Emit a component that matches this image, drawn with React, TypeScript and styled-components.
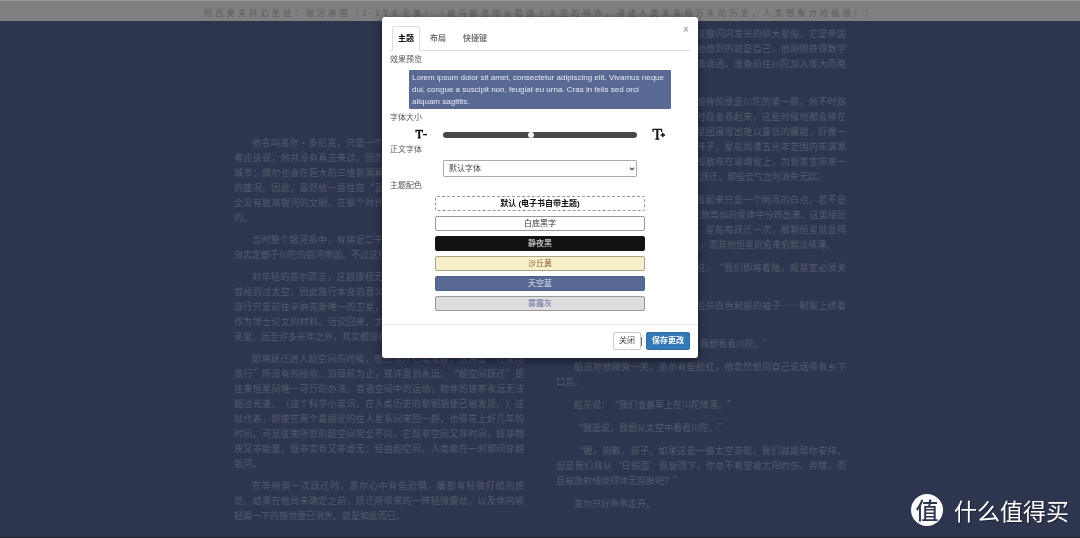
import React, { useState } from "react";
import styled, { createGlobalStyle, css } from "styled-components";

const sans = `"Liberation Sans", "Noto Sans CJK SC", sans-serif`;
const cjk = `"Noto Sans CJK SC", "Liberation Sans", sans-serif`;

const GlobalStyle = createGlobalStyle`
  *, *::before, *::after { box-sizing: border-box; }
  body { margin: 0; background: #2e364f; font-family: ${sans}; overflow: hidden; }
  button, input, select { font-family: inherit; margin: 0; }
`;

const Page = styled.div`
  min-height: 100vh;
  background: #2e364f;
  border-bottom: 1px solid #24272f;
`;

const TitleBar = styled.header`
  height: 21px;
  padding: 5px 16px 0;
  background: #7f7f7f;
  border-top: 1px solid #9b9b9b;
`;

const BookTitle = styled.h1`
  max-width: 672px;
  margin: 0 auto;
  font: 400 8px/14px ${cjk};
  letter-spacing: 3px;
  text-align: justify;
  text-align-last: justify;
  text-spacing-trim: space-all;
  white-space: nowrap;
  color: #5c5c5c;
`;

const Spread = styled.main`
  display: flex;
  align-items: flex-start;
  gap: 32px;
  max-width: 612px;
  margin: 0 auto;
  padding-top: 5px;
`;

const Column = styled.article<{ $top: number; $gap: number }>`
  flex: 1;
  min-width: 0;
  display: flex;
  flex-direction: column;
  gap: ${(p) => p.$gap}px;
  padding-top: ${(p) => p.$top}px;
`;

const Paragraph = styled.p<{ $continued?: boolean }>`
  margin: 0;
  font: 400 9px/15px ${cjk};
  color: #545b6e;
  text-spacing-trim: space-all;

  & > span:first-child {
    text-indent: ${(p) => (p.$continued ? "0" : "2em")};
  }
`;

const Line = styled.span<{ $full: boolean }>`
  display: block;
  white-space: nowrap;
  text-align: left;
  ${(p) =>
    p.$full &&
    css`
      text-align: justify;
      text-align-last: justify;
    `}
`;

const Overlay = styled.div`
  position: fixed;
  inset: 0;
  display: flex;
  justify-content: center;
  align-items: flex-start;
  padding-top: 17px;
`;

const Dialog = styled.section`
  width: 316px;
  background: #fff;
  border-radius: 3px;
  box-shadow: 0 2px 8px rgba(0, 0, 0, 0.55);
  color: #444;
`;

const DialogHead = styled.header`
  display: flex;
  align-items: flex-start;
  margin: 0 8px;
  padding: 9px 0 0 2px;
  border-bottom: 1px solid #ddd;
`;

const TabList = styled.div`
  display: flex;
  flex: 1;
  gap: 3px;
`;

const Tab = styled.button<{ $active: boolean }>`
  height: 25px;
  margin-bottom: -1px;
  padding: 0 5px;
  border: 1px solid ${(p) => (p.$active ? "#ddd" : "transparent")};
  border-bottom-color: ${(p) => (p.$active ? "#fff" : "transparent")};
  border-radius: 3px 3px 0 0;
  background: ${(p) => (p.$active ? "#fff" : "transparent")};
  color: ${(p) => (p.$active ? "#111" : "#777")};
  font-size: 8px;
  font-weight: 700;
  line-height: 12px;

  & + & {
    padding: 0 6px;
  }
`;

const CloseIcon = styled.button`
  width: 8px;
  height: 8px;
  padding: 0;
  border: 0;
  background: none;
  color: #aaa;
  font-size: 10px;
  font-weight: 700;
  line-height: 8px;
`;

const DialogBody = styled.div`
  display: flex;
  flex-direction: column;
  gap: 3px;
  padding: 3px 8px 13px;
`;

const Section = styled.div`
  display: flex;
  flex-direction: column;
  align-items: center;
  gap: 4px;
`;

const Label = styled.label`
  align-self: flex-start;
  font-size: 8px;
  line-height: 12px;
  color: #555;
`;

const Preview = styled.p`
  width: 262px;
  margin: 0;
  padding: 2px 6px 1px 3px;
  background: #586a94;
  border-radius: 1px;
  color: #e6eaf2;
  font-size: 8px;
  line-height: 12px;
`;

const SizeRow = styled.div`
  display: grid;
  grid-template-columns: 28px 194px 28px;
  align-items: center;
  height: 13px;
`;

const SizeButton = styled.button<{ $large?: boolean }>`
  display: flex;
  align-items: center;
  justify-content: ${(p) => (p.$large ? "flex-end" : "flex-start")};
  height: 13px;
  padding: 0;
  border: 0;
  background: none;
`;

const Slider = styled.input`
  appearance: none;
  width: 100%;
  height: 6px;
  border-radius: 3px;
  background: #4a4849;

  &::-webkit-slider-thumb {
    appearance: none;
    width: 6px;
    height: 6px;
    border-radius: 50%;
    background: #f2f2f2;
  }
`;

const SelectBox = styled.div`
  position: relative;
  width: 194px;
  height: 17px;

  svg {
    position: absolute;
    right: 2px;
    top: 7px;
    pointer-events: none;
  }
`;

const FontSelect = styled.select`
  display: block;
  appearance: none;
  width: 100%;
  height: 17px;
  padding: 0 5px;
  border: 1px solid #aaa;
  border-radius: 1px;
  background: #fff;
  color: #444;
  font-size: 8px;
  line-height: 12px;
`;

const ThemeList = styled.div`
  display: flex;
  flex-direction: column;
  gap: 5px;
  width: 210px;
`;

interface Scheme {
  name: string;
  bg: string;
  fg: string;
  border: string;
  bold?: boolean;
}

const ThemeButton = styled.button<{ $scheme: Scheme }>`
  height: 15px;
  padding: 0;
  border: ${(p) => p.$scheme.border};
  border-radius: 2px;
  background: ${(p) => p.$scheme.bg};
  color: ${(p) => p.$scheme.fg};
  font-size: 8px;
  font-weight: ${(p) => (p.$scheme.bold ? 700 : 400)};
  line-height: 12px;
`;

const DialogFoot = styled.footer`
  display: flex;
  justify-content: flex-end;
  align-items: center;
  padding: 7px 8px 8px;
  border-top: 1px solid #e5e5e5;
`;

const Caret = styled.span`
  width: 1px;
  height: 9px;
  margin-right: 4px;
  background: #777;
`;

const FootButton = styled.button<{ $primary?: boolean }>`
  height: 18px;
  padding: 0 5px;
  border: 1px solid ${(p) => (p.$primary ? "#2e6da4" : "#ccc")};
  border-radius: 2px;
  background: ${(p) => (p.$primary ? "#337ab7" : "#fff")};
  color: ${(p) => (p.$primary ? "#fff" : "#444")};
  font-size: 8px;
  font-weight: ${(p) => (p.$primary ? 700 : 400)};
  line-height: 12px;
`;

const Watermark = styled.div`
  position: fixed;
  right: 11px;
  bottom: 12px;
  display: flex;
  align-items: center;
  gap: 11px;
  color: #fff;
  font: 400 23px/32px ${cjk};
  text-shadow: 1px 1px 1px rgba(0, 0, 0, 0.4);
`;

const Seal = styled.span`
  width: 32px;
  height: 32px;
  border-radius: 50%;
  background: #fff;
  color: #2e364f;
  font: 500 23px/30px ${cjk};
  text-align: center;
  text-shadow: none;
`;

const leftPage: string[][] = [
  [
    "他名叫盖尔·多尼克，只是一个乡下孩子，以前未见过川陀——或",
    "者应该说，他并没有真正来过。因为他曾在超波影像中看过无数次这座",
    "城市；偶尔也会在巨大的三维新闻幕中观赏皇帝加冕或是银河议会开幕",
    "的盛况。因此，虽然他一直住在“蓝移区”边缘的辛纳克斯行星，却完",
    "全没有脱离银河的文明。在那个时代，银河中任何一处都不会与世隔绝",
    "的。",
  ],
  [
    "当时整个银河系中，有将近二千五百万颗住人行星，每一颗都直接",
    "效忠定都于川陀的银河帝国。不过这种情况即将在半个世纪之后结束。",
  ],
  [
    "对年轻的盖尔而言，这趟旅程无疑是学术生涯中的第一个高峰。他",
    "曾经到过太空，因此旅行本身的意义不算特别重大。其实他以往的太空",
    "旅行只是前往辛纳克斯唯一的卫星，为了搜集陨石漂移动力学数据，以",
    "作为博士论文的材料。话说回来，太空旅行其实全都一样，不论是几百",
    "英里，远至许多光年之外，其实都没有什么差别。",
  ],
  [
    "即将跃迁进入超空间的时候，他已做好心理准备，这将是“行星际",
    "旅行”所没有的经验。到目前为止，或许直到永远，“超空间跃迁”是",
    "往来恒星间唯一可行的办法。普通空间中的运动，物体的速率永远无法",
    "超过光速。（这个科学小常识，在人类历史的黎明期便已被发现。）这",
    "就代表，即使在两个最接近的住人星系间来回一趟，也得花上好几年的",
    "时间。可是匪夷所思的超空间完全不同，它既非空间又非时间，既非物",
    "质又非能量，既非实有又非虚无；经由超空间，人类能在一刹那间穿越",
    "银河。",
  ],
  [
    "在等待第一次跃迁时，盖尔心中有些恐惧，腹部有轻微打结的感",
    "觉。结果在他尚未确定之前，跃迁所带来的一阵轻微震动，以及体内被",
    "轻踢一下的感觉便已消失。就是如此而已。",
  ],
];

const rightPage: string[][] = [
  [
    "在此之后，他的心里只剩下眼前的这艘闪闪发光的硕大星船，它是帝国",
    "一万两千年科技的总结晶。其次，他想到的就是自己，他刚刚获得数学",
    "博士学位，又收到了哈里·谢顿的邀请函，准备前往川陀加入庞大而略",
    "带神秘的谢顿计划。",
  ],
  [
    "对跃迁感到失望后，盖尔真正期待的便是川陀的第一眼。他不时跑",
    "去观景室，那里的钢质窗盖在特定时段会卷起来。这些时候他都会待在",
    "那里，观看着群星的闪耀，欣赏着星团展现出难以置信的朦胧，好像一",
    "大群永远定住的萤火虫。曾经有一阵子，星船周遭五光年范围内布满寒",
    "冷的蓝白色的气状云，好像牛奶一般散布在玻璃窗上，为观景室带来一",
    "丝寒意。但是在两小时之后，又一次跃迁，那些云气立时消失无踪。",
  ],
  [
    "川陀的太阳首度出现之时，它看起来只是一个明亮的白点，若不是",
    "有了星船向导的指点，根本无法从无数类似的星体中分辨出来。这里接近",
    "银河的核心，恒星分布异常的稠密，星船每跃迁一次，那颗恒星就显得",
    "更加明亮一些，终于盖过了其他的光，而其他恒星则愈来愈黯淡稀薄。",
  ],
  [
    "一位高级船员走了过来，对他说：“我们即将着陆，观景室必须关",
    "闭，请准备着陆。”",
  ],
  [
    "盖尔跟在后面，扯了扯那一位船员白色制服的袖子——制服上绣着",
    "星船与太阳的国徽。",
  ],
  ["他说：“能不能让我留下来呢？我想看看川陀。”"],
  ["船员对他微微一笑。盖尔有些脸红，他忽然想到自己说话带有乡下", "口音。"],
  ["船员说：“我们准备早上在川陀降落。”"],
  ["“我是说，我想从太空中看看川陀。”"],
  [
    "“喔，抱歉，孩子。如果这是一艘太空游艇，我们就能帮你安排。",
    "但是我们将从‘日照面’盘旋而下，你总不希望被太阳灼伤、弄瞎，而",
    "且被放射线烧得体无完肤吧？”",
  ],
  ["盖尔只好乖乖走开。"],
];

const schemes: Scheme[] = [
  { name: "默认 (电子书自带主题)", bg: "#fff", fg: "#111", border: "1px dashed #999", bold: true },
  { name: "白底黑字", bg: "#fff", fg: "#333", border: "1px solid #999" },
  { name: "静夜黑", bg: "#121212", fg: "#eee", border: "1px solid #121212" },
  { name: "沙丘黄", bg: "#f6efc9", fg: "#8a5a3c", border: "1px solid #aaa68e" },
  { name: "天空蓝", bg: "#586a94", fg: "#dfe6f2", border: "1px solid #4d5d85" },
  { name: "雾霾灰", bg: "#dedcde", fg: "#6a70a0", border: "1px solid #999" },
];

const tabs = ["主题", "布局", "快捷键"];

interface PageTextProps {
  paragraphs: string[][];
  top: number;
  gap: number;
  continued?: boolean;
}

function PageText({ paragraphs, top, gap, continued }: PageTextProps) {
  return (
    <Column $top={top} $gap={gap}>
      {paragraphs.map((lines, i) => (
        <Paragraph key={i} $continued={continued && i === 0}>
          {lines.map((line, j) => (
            <Line key={j} $full={j < lines.length - 1}>
              {line}
            </Line>
          ))}
        </Paragraph>
      ))}
    </Column>
  );
}

export default function App() {
  const [tab, setTab] = useState(0);
  const [size, setSize] = useState(45);

  return (
    <>
      <GlobalStyle />
      <Page lang="zh-CN">
        <TitleBar>
          <BookTitle>
            阿西莫夫科幻圣经：银河帝国（1-15大全集）（被马斯克用火箭送上太空的神作，讲述人类未来两万年的历史，人类想象力的极限！）
          </BookTitle>
        </TitleBar>
        <Spread>
          <PageText paragraphs={leftPage} top={109} gap={7} />
          <PageText paragraphs={rightPage} top={0} gap={8} continued />
        </Spread>
      </Page>

      <Overlay lang="zh-CN">
        <Dialog role="dialog" aria-label="主题">
          <DialogHead>
            <TabList role="tablist">
              {tabs.map((name, i) => (
                <Tab
                  key={name}
                  type="button"
                  role="tab"
                  aria-selected={tab === i}
                  $active={tab === i}
                  onClick={() => setTab(i)}
                >
                  {name}
                </Tab>
              ))}
            </TabList>
            <CloseIcon type="button" aria-label="关闭">
              ×
            </CloseIcon>
          </DialogHead>

          <DialogBody>
            <Section>
              <Label as="span">效果预览</Label>
              <Preview>
                Lorem ipsum dolor sit amet, consectetur adipiscing elit. Vivamus neque dui, congue a
                suscipit non, feugiat eu urna. Cras in felis sed orci aliquam sagittis.
              </Preview>
            </Section>

            <Section>
              <Label htmlFor="font-size">字体大小</Label>
              <SizeRow>
                <SizeButton type="button" aria-label="缩小字体" onClick={() => setSize(size - 5)}>
                  <svg width="13" height="13" viewBox="0 0 13 13" aria-hidden="true">
                    <g fill="none" stroke="#111">
                      <path d="M1 4.6V2.4H7.4V4.6" strokeWidth="1.2" />
                      <path d="M4.2 2.4V10" strokeWidth="1.9" />
                      <path d="M2.6 10H5.8" strokeWidth="1.1" />
                      <path d="M8 6.6H12" strokeWidth="1.4" />
                    </g>
                  </svg>
                </SizeButton>
                <Slider
                  id="font-size"
                  type="range"
                  min={0}
                  max={100}
                  value={size}
                  onChange={(e) => setSize(Number(e.target.value))}
                />
                <SizeButton
                  type="button"
                  $large
                  aria-label="放大字体"
                  onClick={() => setSize(size + 5)}
                >
                  <svg width="13" height="13" viewBox="0 0 13 13" aria-hidden="true">
                    <g fill="none" stroke="#111">
                      <path d="M1 4V1.4H9.6V4" strokeWidth="1.2" />
                      <path d="M5.3 1.4V11" strokeWidth="2" />
                      <path d="M3.2 11.2H7.4" strokeWidth="1.2" />
                      <path d="M8.6 7H13M10.8 4.8V9.2" strokeWidth="1.4" />
                    </g>
                  </svg>
                </SizeButton>
              </SizeRow>
            </Section>

            <Section>
              <Label htmlFor="font-family">正文字体</Label>
              <SelectBox>
                <FontSelect id="font-family">
                  <option>默认字体</option>
                </FontSelect>
                <svg width="6" height="4" viewBox="0 0 6 4" aria-hidden="true">
                  <path d="M1 0.7L3 2.8L5 0.7" fill="none" stroke="#333" strokeWidth="1.1" />
                </svg>
              </SelectBox>
            </Section>

            <Section>
              <Label as="span">主题配色</Label>
              <ThemeList>
                {schemes.map((s) => (
                  <ThemeButton key={s.name} type="button" $scheme={s}>
                    {s.name}
                  </ThemeButton>
                ))}
              </ThemeList>
            </Section>
          </DialogBody>

          <DialogFoot>
            <FootButton type="button">关闭</FootButton>
            <Caret />
            <FootButton type="button" $primary>
              保存更改
            </FootButton>
          </DialogFoot>
        </Dialog>
      </Overlay>

      <Watermark lang="zh-CN">
        <Seal>值</Seal>
        <span>什么值得买</span>
      </Watermark>
    </>
  );
}
